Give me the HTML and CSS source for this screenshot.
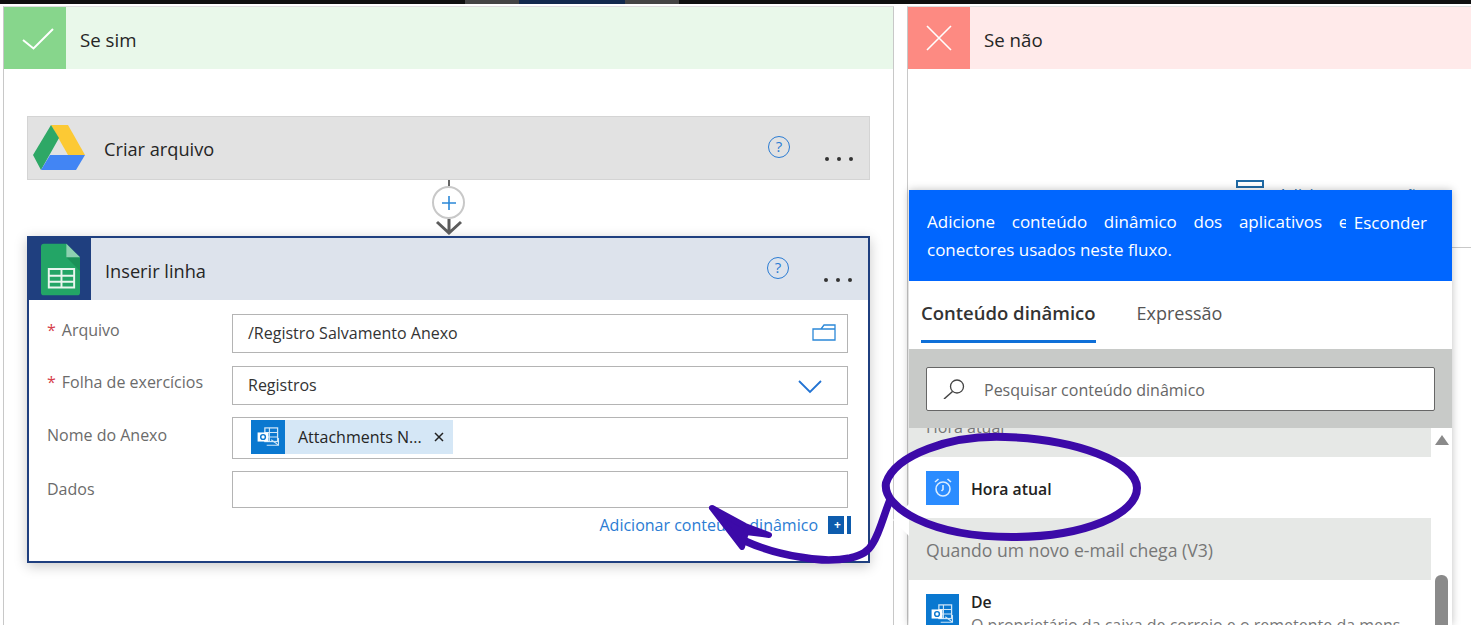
FILE: index.html
```html
<!DOCTYPE html>
<html lang="en">
<head>
  <meta charset="UTF-8" />
  <title>Se sim / Se não</title>
  <meta name="viewport" content="width=device-width, initial-scale=1.0"/>
  <link rel="stylesheet" href="styles.css">
</head>
<body>
  <div class="topbar">
    <span class="topbar-gray"></span>
    <span class="topbar-navy"></span>
    <span class="topbar-gray"></span>
  </div>

  <div class="branches">
    <!-- Se sim -->
    <section class="branch branch-yes">
      <div class="branch-head">
        <div class="branch-icon">
          <svg class="check" width="32" height="22" viewBox="0 0 32 22"><path d="M1 12L11.5 20.5L31 1" fill="none" stroke="#fff" stroke-width="2"/></svg>
        </div>
        <span class="branch-title">Se sim</span>
      </div>

      <div class="card card-drive">
        <div class="card-head">
          <svg class="drive-logo" width="52" height="45" viewBox="0 0 52 45">
            <polygon points="18,0 35,0 52,30 35,30" fill="#fcc934"/>
            <polygon points="18,0 26,13 8,45 0,30" fill="#2ea866"/>
            <polygon points="17,30 52,30 43,45 8,45" fill="#4285f4"/>
          </svg>
          <span class="card-title">Criar arquivo</span>
          <span class="help">?</span>
          <span class="dots"><i></i><i></i><i></i></span>
        </div>
      </div>

      <div class="connector">
        <span class="connector-stub"></span>
        <span class="plus">
          <svg width="16" height="16" viewBox="0 0 16 16"><path d="M8 1V15M1 8H15" stroke="#2b88d8" stroke-width="1.6"/></svg>
        </span>
        <svg class="arrow-down" width="28" height="16" viewBox="0 0 28 16"><path d="M14 0V14M2 3L14 14L26 3" fill="none" stroke="#5c5c5c" stroke-width="3"/></svg>
      </div>

      <div class="card card-sheets">
        <div class="card-head">
          <div class="sheets-block">
            <svg width="39" height="53" viewBox="0 0 40 53">
              <path d="M3 0H26L40 14V50a3 3 0 0 1-3 3H3a3 3 0 0 1-3-3V3a3 3 0 0 1 3-3Z" fill="#23a566"/>
              <path d="M26 14H40V28Z" fill="#1b9158"/>
              <path d="M26 0L40 14H26Z" fill="#8ed1b1"/>
              <path d="M8 26H34V45H8ZM8 33H34M8 39H34M21 26V45" fill="none" stroke="#e8f5ee" stroke-width="2"/>
            </svg>
          </div>
          <span class="card-title">Inserir linha</span>
          <span class="help">?</span>
          <span class="dots"><i></i><i></i><i></i></span>
        </div>

        <div class="form">
          <div class="row row-arquivo">
            <label class="label"><b>*</b>Arquivo</label>
            <div class="field">
              <span>/Registro Salvamento Anexo</span>
              <svg class="field-icon" width="24" height="17" viewBox="0 0 24 17"><path d="M1 5V16H23V1H12L9 5ZM1 5H23" fill="none" stroke="#2b88d8" stroke-width="1.3"/></svg>
            </div>
          </div>
          <div class="row row-folha">
            <label class="label"><b>*</b>Folha de exercícios</label>
            <div class="field">
              <span>Registros</span>
              <svg class="field-icon" width="24" height="14" viewBox="0 0 24 14"><path d="M1 1L12 12L23 1" fill="none" stroke="#2273d3" stroke-width="1.8"/></svg>
            </div>
          </div>
          <div class="row row-anexo">
            <label class="label">Nome do Anexo</label>
            <div class="field field-token">
              <span class="token">
                <span class="token-icon">
                  <svg width="23" height="20" viewBox="0 0 24 22"><rect x="8" y="1" width="14" height="15" fill="none" stroke="#cfe6f7" stroke-width="1.4"/><path d="M13 1V16M8 6H22M8 11H22M10 20H23V12M15 14L23 20" fill="none" stroke="#cfe6f7" stroke-width="1.2"/><rect x="0" y="6" width="12" height="10" fill="#fff"/><circle cx="6" cy="11" r="2.6" fill="none" stroke="#0a78d0" stroke-width="1.6"/></svg>
                </span>
                <span class="token-text">Attachments N...</span>
                <svg class="token-x" width="10" height="10" viewBox="0 0 10 10"><path d="M1 1L9 9M9 1L1 9" stroke="#222" stroke-width="1.5"/></svg>
              </span>
            </div>
          </div>
          <div class="row row-dados">
            <label class="label">Dados</label>
            <div class="field"></div>
          </div>
          <div class="dynamic-link">
            <span>Adicionar conteúdo dinâmico</span>
            <span class="dynamic-btn"><span>+</span></span>
          </div>
        </div>
      </div>
    </section>

    <!-- Se não -->
    <section class="branch branch-no">
      <div class="branch-head">
        <div class="branch-icon">
          <svg width="26" height="26" viewBox="0 0 26 26"><path d="M1 1L25 25M25 1L1 25" fill="none" stroke="#fff" stroke-width="1.6"/></svg>
        </div>
        <span class="branch-title">Se não</span>
      </div>
      <div class="add-action">
        <span class="add-action-icon"></span>
        <span class="add-action-text">Adicionar uma ação</span>
      </div>
      <div class="behind-line"></div>
    </section>
  </div>

  <!-- Painel de conteúdo dinâmico -->
  <aside class="panel">
    <span class="panel-pointer"></span>
    <div class="panel-blue">
      <p class="panel-intro">Adicione conteúdo dinâmico dos aplicativos e</p>
      <span class="panel-hide">Esconder</span>
      <p class="panel-intro-2">conectores usados neste fluxo.</p>
    </div>
    <div class="tabs">
      <span class="tab tab-active">Conteúdo dinâmico</span>
      <span class="tab">Expressão</span>
    </div>
    <div class="search-band">
      <div class="search">
        <svg width="22" height="20" viewBox="0 0 22 20"><circle cx="14" cy="7.5" r="6.5" fill="none" stroke="#444" stroke-width="1.3"/><path d="M9.5 12.5L1 20" stroke="#444" stroke-width="1.5"/></svg>
        <span>Pesquisar conteúdo dinâmico</span>
      </div>
    </div>
    <div class="list">
      <div class="list-rows">
        <div class="group group-cut"><span>Hora atual</span></div>
        <div class="item item-time">
          <span class="item-icon item-icon-time">
            <svg width="20" height="22" viewBox="0 0 20 22"><circle cx="10" cy="12" r="7" fill="none" stroke="#d9ecff" stroke-width="1.6"/><path d="M10 8V12.5L8.5 14M2 5L5.5 2M18 5L14.5 2" fill="none" stroke="#d9ecff" stroke-width="1.6"/></svg>
          </span>
          <span class="item-name">Hora atual</span>
        </div>
        <div class="group"><span>Quando um novo e-mail chega (V3)</span></div>
        <div class="item item-from">
          <span class="item-icon item-icon-outlook">
            <svg width="23" height="20" viewBox="0 0 24 22"><rect x="8" y="1" width="14" height="15" fill="none" stroke="#cfe6f7" stroke-width="1.4"/><path d="M13 1V16M8 6H22M8 11H22M10 20H23V12M15 14L23 20" fill="none" stroke="#cfe6f7" stroke-width="1.2"/><rect x="0" y="6" width="12" height="10" fill="#fff"/><circle cx="6" cy="11" r="2.6" fill="none" stroke="#0a78d0" stroke-width="1.6"/></svg>
          </span>
          <div class="item-body">
            <span class="item-name">De</span>
            <span class="item-desc">O proprietário da caixa de correio e o remetente da mens</span>
          </div>
        </div>
      </div>
      <div class="scroll">
        <span class="scroll-up"></span>
        <span class="scroll-thumb"></span>
      </div>
    </div>
  </aside>

  <!-- Anotação à mão -->
  <svg class="scribble" width="1471" height="625" viewBox="0 0 1471 625">
    <path d="M1005 437C950 435 895 455 886 483C882 507 930 537 1012 537C1085 537 1137 514 1137 488C1137 462 1075 439 1005 437Z" fill="none" stroke="#3c0aa8" stroke-width="8"/>
    <path d="M890 500C884 514 880 532 873 543C868 552 862 555 850 558C835 561 815 560 800 557C780 554 765 550 745 541" fill="none" stroke="#3c0aa8" stroke-width="7.5" stroke-linecap="round"/>
    <path d="M712 508L745 526L769 535L746 532L742 547Z" fill="#3c0aa8" stroke="#3c0aa8" stroke-width="6" stroke-linejoin="round"/>
  </svg>
</body>
</html>
```

FILE: styles.css
```css
* {
  box-sizing: border-box;
}
body {
  margin: 0;
  width: 1471px;
  height: 625px;
  overflow: hidden;
  position: relative;
  background-color: #fff;
  color: #252525;
  font-family: 'Open Sans', 'Noto Sans', sans-serif;
}
.topbar {
  display: flex;
  height: 4px;
  background-color: #0f0f0f;
  padding-left: 465px;
}
.topbar-gray {
  width: 54px;
  background-color: #444;
}
.topbar-navy {
  width: 106px;
  background-color: #12294d;
}
.branches {
  display: flex;
  padding: 2px 0 0 3px;
  height: 621px;
  gap: 13px;
}
.branch {
  border-left: 1px solid #c8c8c8;
  border-top: 1px solid #dedede;
}
.branch-yes {
  width: 891px;
  border-right: 1px solid #c8c8c8;
}
.branch-no {
  flex: 1;
  position: relative;
}
.branch-head {
  display: flex;
  align-items: center;
  height: 62px;
}
.branch-yes .branch-head {
  background-color: #e9f8ea;
}
.branch-no .branch-head {
  background-color: #ffeaea;
}
.branch-icon {
  width: 62px;
  height: 62px;
  display: flex;
  align-items: center;
  justify-content: center;
}
.branch-yes .branch-icon {
  background-color: #87d68c;
}
.branch-no .branch-icon {
  background-color: #fd8a82;
}
.check {
  margin: 2px 0 0 5px;
}
.branch-title {
  margin: 2px 0 0 14px;
  font-size: 18.7px;
}
.card {
  margin: 0 23px 0 23px;
}
.card-drive {
  margin-top: 47px;
  height: 64px;
  background-color: #e2e2e2;
  border: 1px solid #d4d4d4;
}
.card-head {
  display: flex;
  align-items: center;
  height: 62px;
}
.drive-logo {
  margin: -2px 0 0 5px;
}
.card-title {
  font-size: 18.2px;
  margin: 2px 0 0 19px;
}
.help {
  margin-left: auto;
  width: 22px;
  height: 22px;
  margin-top: -2px;
  border: 1.5px solid #2b7cd3;
  border-radius: 50%;
  color: #2b7cd3;
  font-size: 15px;
  line-height: 19px;
  text-align: center;
}
.dots {
  display: flex;
  gap: 8px;
  margin: 22px 16px 0 35px;
}
.dots i {
  width: 4px;
  height: 4px;
  border-radius: 50%;
  background-color: #333;
}
.connector {
  height: 56px;
  display: flex;
  flex-direction: column;
  align-items: center;
  width: 843px;
  margin-left: 23px;
}
.connector-stub {
  width: 2px;
  height: 6px;
  background-color: #666;
}
.plus {
  width: 33px;
  height: 33px;
  border: 2px solid #c8c8c8;
  border-radius: 50%;
  background-color: #fff;
  display: flex;
  align-items: center;
  justify-content: center;
  flex-shrink: 0;
}
.arrow-down {
  flex-shrink: 0;
}
.card-sheets {
  height: 327px;
  border: 2px solid #1f3f7f;
  box-shadow: 0 3px 12px rgba(0, 0, 0, 0.22);
}
.card-sheets .card-head {
  background-color: #dde3ec;
}
.sheets-block {
  width: 62px;
  height: 62px;
  background-color: #1f3f7f;
  display: flex;
  align-items: center;
  justify-content: center;
}
.card-sheets .card-title {
  margin: 4px 0 0 14px;
}
.form {
  padding: 14px 20px 0 18px;
  font-size: 16px;
}
.row {
  display: flex;
}
.row-arquivo {
  height: 39px;
}
.row-folha {
  height: 39px;
  margin-top: 13px;
}
.row-anexo {
  height: 42px;
  margin-top: 12px;
}
.row-dados {
  height: 37px;
  margin-top: 12px;
}
.label {
  width: 185px;
  color: #6b6b6b;
  padding-top: 5px;
  flex-shrink: 0;
}
.row-anexo .label,
.row-dados .label {
  padding-top: 7px;
}
.label b {
  color: #d6404a;
  font-weight: normal;
  margin-right: 6px;
}
.field {
  flex: 1;
  border: 1px solid #b4b4b4;
  display: flex;
  align-items: center;
  justify-content: space-between;
  padding: 0 25px 2px 15px;
  color: #333;
}
.row-arquivo .field {
  padding-right: 11px;
}
.row-folha .field-icon {
  margin-top: 4px;
}
.field-token {
  padding: 0 0 2px 18px;
  justify-content: flex-start;
}
.token {
  display: flex;
  align-items: center;
  width: 202px;
  height: 34px;
  background-color: #d5e7f6;
}
.token-icon {
  width: 34px;
  height: 34px;
  background-color: #0a78d0;
  display: flex;
  align-items: center;
  justify-content: center;
}
.token-text {
  margin-left: 13px;
  color: #252525;
}
.token-x {
  margin-left: 12px;
}
.dynamic-link {
  display: flex;
  align-items: center;
  justify-content: flex-end;
  margin-top: 6px;
  margin-right: -3px;
  color: #2b7cd3;
}
.dynamic-btn {
  width: 23px;
  height: 18px;
  margin-left: 10px;
  background-color: #0e5cad;
  border-right: 4px solid #0e5cad;
  color: #fff;
  font-size: 12px;
  font-weight: bold;
  line-height: 17px;
  text-align: center;
  box-shadow: inset -3px 0 0 #fff;
}
.add-action {
  display: flex;
  align-items: flex-start;
  gap: 14px;
  margin: 111px 0 0 328px;
  color: #2b6fb0;
  font-size: 16px;
}
.add-action-icon {
  width: 28px;
  height: 8px;
  border: 2px solid #1f6aa5;
  flex-shrink: 0;
}
.add-action-text {
  margin-top: 4px;
  white-space: nowrap;
}
.behind-line {
  position: absolute;
  left: 500px;
  right: 0;
  top: 240px;
  height: 1px;
  background-color: #c8c8c8;
}
.panel {
  position: absolute;
  left: 909px;
  top: 190px;
  width: 543px;
  height: 435px;
  background-color: #fff;
  box-shadow: 0 0 8px rgba(0, 0, 0, 0.25);
}
.panel-pointer {
  position: absolute;
  left: -16px;
  top: 314px;
  width: 0;
  height: 0;
  border-top: 16px solid transparent;
  border-bottom: 16px solid transparent;
  border-right: 16px solid #fff;
}
.panel-blue {
  height: 91px;
  background-color: #0066ff;
  color: #fff;
  font-size: 17px;
  padding: 18px 24px 0 18px;
  position: relative;
}
.panel-intro {
  margin: 0;
  width: 419px;
  white-space: nowrap;
  overflow: hidden;
  word-spacing: 12.25px;
  line-height: 28px;
}
.panel-intro-2 {
  margin: 0;
  line-height: 28px;
}
.panel-hide {
  position: absolute;
  right: 25px;
  top: 19px;
  line-height: 28px;
}
.tabs {
  height: 68px;
  display: flex;
  gap: 41px;
  padding: 0 12px;
  font-size: 18px;
  color: #555;
}
.tab {
  height: 62px;
  line-height: 64px;
}
.tab-active {
  font-size: 18.5px;
  color: #333;
  font-weight: 600;
  border-bottom: 3px solid #0e6fd8;
}
.search-band {
  height: 79px;
  background-color: #c8cac8;
  padding: 18px 17px 0;
}
.search {
  display: flex;
  align-items: center;
  gap: 19px;
  height: 44px;
  padding-left: 16px;
  background-color: #fff;
  border: 1px solid #666;
  border-radius: 2px;
  font-size: 16px;
  color: #666;
}
.search span {
  padding-top: 2px;
}
.list {
  display: flex;
  height: 197px;
  overflow: hidden;
}
.list-rows {
  width: 522px;
}
.group {
  height: 62px;
  background-color: #e6e8e6;
  color: #777;
  font-size: 17.6px;
  padding: 20px 17px 0;
}
.group-cut {
  height: 29px;
  padding-top: 0;
  font-size: 16px;
  overflow: hidden;
}
.group-cut span {
  display: block;
  margin-top: -12px;
}
.item {
  display: flex;
  gap: 12px;
  padding: 14px 17px 0;
  height: 61px;
  font-size: 15.8px;
}
.item-from {
  align-items: flex-start;
  height: 90px;
}
.item-icon {
  width: 33px;
  height: 34px;
  display: flex;
  align-items: center;
  justify-content: center;
  flex-shrink: 0;
}
.item-icon-time {
  background-color: #2b8cff;
}
.item-icon-outlook {
  background-color: #0a78d0;
  height: 40px;
}
.item-time .item-name {
  line-height: 36px;
}
.item-name {
  font-weight: 600;
  color: #222;
}
.item-body {
  margin-top: -3px;
  white-space: nowrap;
}
.item-body span {
  display: block;
}
.item-desc {
  color: #777;
  font-size: 16px;
  margin-top: 1px;
}
.scroll {
  flex: 1;
  position: relative;
}
.scroll-up {
  position: absolute;
  left: 4px;
  top: 7px;
  border-left: 7px solid transparent;
  border-right: 7px solid transparent;
  border-bottom: 10px solid #8a8a8a;
}
.scroll-thumb {
  position: absolute;
  left: 4px;
  top: 147px;
  width: 13px;
  height: 70px;
  border-radius: 6px;
  background-color: #8a8a8a;
}
.scribble {
  position: absolute;
  left: 0;
  top: 0;
  pointer-events: none;
}
```
